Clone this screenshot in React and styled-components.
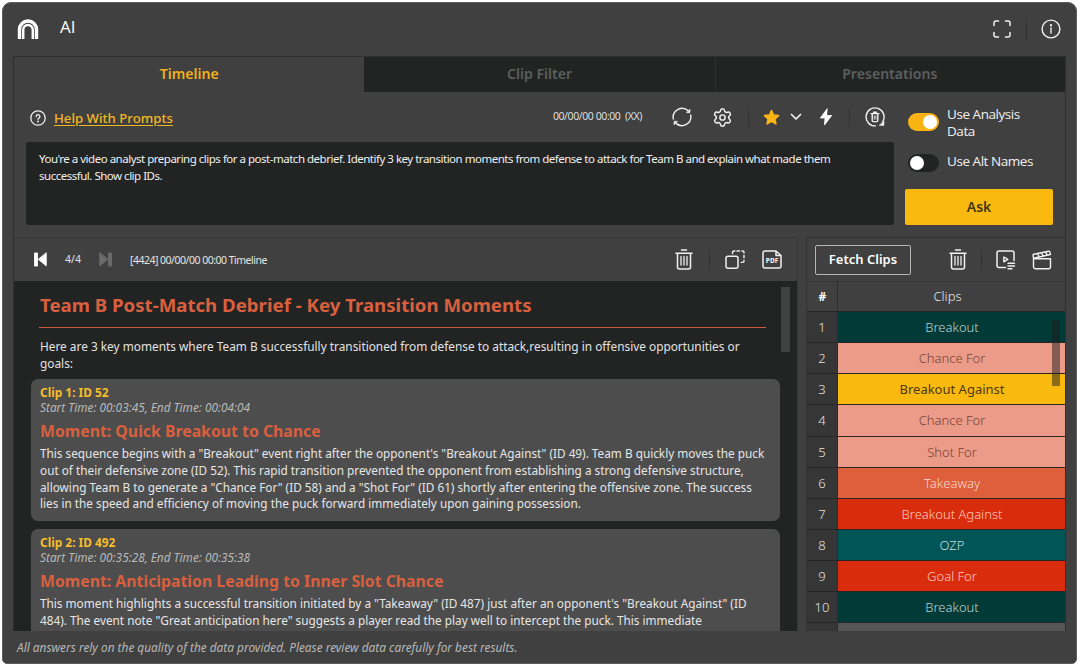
import React, { useState } from 'react'
import styled, { createGlobalStyle } from 'styled-components'
import { Settings } from 'lucide-react'

const GlobalStyle = createGlobalStyle`
  *{
    box-sizing:border-box;
  }
  body{
    margin:0;
    background:#fff;
    font-family:"Noto Sans","Open Sans",sans-serif;
    color:#e8e8e8;
  }
  button{
    font-family:inherit;
    cursor:pointer;
  }
  p,h1,h2,h3{
    margin:0;
  }
`

const clips = [
  { name: 'Breakout', bg: '#023a37', color: '#bdd3d1' },
  { name: 'Chance For', bg: '#ec9b89', color: '#744239' },
  { name: 'Breakout Against', bg: '#fab90f', color: '#4a3a12', weight: 400 },
  { name: 'Chance For', bg: '#ec9b89', color: '#744239' },
  { name: 'Shot For', bg: '#ec9b89', color: '#744239' },
  { name: 'Takeaway', bg: '#de5f3b', color: '#fbd8cd' },
  { name: 'Breakout Against', bg: '#d92c0c', color: '#fdcabc' },
  { name: 'OZP', bg: '#025557', color: '#c0dede' },
  { name: 'Goal For', bg: '#d92c0c', color: '#fdcabc' },
  { name: 'Breakout', bg: '#023a37', color: '#bdd3d1' },
]

const moments = [
  {
    clip: 'Clip 1: ID 52',
    time: 'Start Time: 00:03:45, End Time: 00:04:04',
    title: 'Moment: Quick Breakout to Chance',
    lines: [
      'This sequence begins with a "Breakout" event right after the opponent\'s "Breakout Against" (ID 49). Team B quickly moves the puck',
      'out of their defensive zone (ID 52). This rapid transition prevented the opponent from establishing a strong defensive structure,',
      'allowing Team B to generate a "Chance For" (ID 58) and a "Shot For" (ID 61) shortly after entering the offensive zone. The success',
      'lies in the speed and efficiency of moving the puck forward immediately upon gaining possession.',
    ],
  },
  {
    clip: 'Clip 2: ID 492',
    time: 'Start Time: 00:35:28, End Time: 00:35:38',
    title: 'Moment: Anticipation Leading to Inner Slot Chance',
    lines: [
      'This moment highlights a successful transition initiated by a "Takeaway" (ID 487) just after an opponent\'s "Breakout Against" (ID',
      '484). The event note "Great anticipation here" suggests a player read the play well to intercept the puck. This immediate',
    ],
  },
]

const Svg = ({ w = 20, h = 20, box = '0 0 20 20', sw = 1.5, color = '#f0f0f0', children }) => (
  <svg width={w} height={h} viewBox={box} fill="none" stroke={color} strokeWidth={sw} strokeLinecap="round" strokeLinejoin="round">
    {children}
  </svg>
)

const Logo = () => (
  <Svg w={22} h={21} box="0 0 22 21" color="#fff">
    <path d="M2.500 20V10.500a8.500 8.500 0 0 1 17 0V20" strokeWidth="3.400" strokeLinecap="butt" />
    <path d="M6.200 20V10.800a4.800 4.800 0 0 1 9.600 0V20" strokeWidth="2.500" strokeLinecap="butt" />
  </Svg>
)

const ExpandIcon = () => (
  <Svg w={18} h={18} box="0 0 18 18">
    <path d="M1 5.500V3a2 2 0 0 1 2-2h2.500M12.500 1H15a2 2 0 0 1 2 2v2.500M17 12.500V15a2 2 0 0 1-2 2h-2.500M5.500 17H3a2 2 0 0 1-2-2v-2.500" />
  </Svg>
)

const InfoIcon = () => (
  <Svg sw={1.4}>
    <circle cx="10" cy="10" r="8.900" />
    <path d="M10 9v5" />
    <circle cx="10" cy="6.200" r=".5" fill="#f0f0f0" />
  </Svg>
)

const HelpIcon = () => (
  <Svg w={16} h={16} box="0 0 16 16" sw={1.3}>
    <circle cx="8" cy="8" r="7.200" />
    <path d="M6.200 6.500a1.850 1.850 0 1 1 2.700 1.650c-.6.300-.9.600-.9 1.150" />
    <circle cx="8" cy="11.400" r=".35" fill="#f0f0f0" />
  </Svg>
)

const RefreshIcon = () => (
  <Svg sw={1.400}>
    <path d="M1.300 12A9 9 0 0 1 16 3.600M18.700 8A9 9 0 0 1 4 16.400" />
    <path d="M18 2.400v3.300h-3.300zM2 17.600v-3.300h3.300z" fill="#f0f0f0" strokeWidth=".6" />
  </Svg>
)

const StarIcon = () => (
  <Svg w={17} h={17} box="0 0 17 17" color="#fab514" sw={1.600}>
    <path d="M8.500 1.500l2.100 4.500 4.900.6-3.600 3.300 1 4.900-4.400-2.400-4.400 2.400 1-4.900L1.500 6.600l4.900-.6z" fill="#fab514" />
  </Svg>
)

const ChevronIcon = () => (
  <Svg w={12} h={8} box="0 0 12 8" sw={1.700}>
    <path d="M1.500 1.500L6 6l4.500-4.500" />
  </Svg>
)

const BoltIcon = () => (
  <Svg w={14} h={18} box="0 0 14 18" color="#fff" sw={.8}>
    <path d="M8 1L1.300 10H6l-.5 7L12.700 7.500H8z" fill="#fff" />
  </Svg>
)

const ResetTrashIcon = () => (
  <Svg sw={1.400}>
    <path d="M10.500 18.900A9 9 0 1 1 17.800 14.500" />
    <path d="M19 13.800v4.600h-4.600z" fill="#f0f0f0" strokeWidth=".5" />
    <path d="M6 6.600h8M8.500 5.200h3M7.200 6.600v7a1 1 0 0 0 1 1h3.600a1 1 0 0 0 1-1v-7" />
    <path d="M9.200 9v3.200M10.900 9v3.200" strokeWidth=".9" />
  </Svg>
)

const TrashIcon = () => (
  <Svg w={18} h={21} box="0 0 18 21" sw={1.500}>
    <path d="M1 4.200h16M6.500 1h5M2.500 4.200V18a2 2 0 0 0 2 2h9a2 2 0 0 0 2-2V4.200" />
    <path d="M6 7.500v8.500M9 7.500v8.500M12 7.500v8.500" strokeWidth="1.300" />
  </Svg>
)

const CopyIcon = () => (
  <Svg w={20} h={19} box="0 0 20 19">
    <rect x="1" y="6.200" width="12" height="12" rx="2" />
    <path d="M7.500 3.500V2.500a1.500 1.500 0 0 1 1.500-1.500h.8M12 1h2.500M17 1h.7a1.300 1.300 0 0 1 1.300 1.300v.7M19 5.500v2.200M19 10.200v.9a1.300 1.300 0 0 1-1.300 1.300h-1.500" strokeWidth="1.400" />
  </Svg>
)

const PdfLabel = styled.text`
  font:800 6.500px "Noto Sans",sans-serif;
  fill:#f0f0f0;
  stroke:none;
`

const PdfIcon = () => (
  <Svg w={20} h={19} box="0 0 20 19">
    <path d="M14 1H3a2 2 0 0 0-2 2v13a2 2 0 0 0 2 2h14a2 2 0 0 0 2-2V5.500zM14 1v4.500h5" />
    <PdfLabel x="10" y="12.500" textAnchor="middle">PDF</PdfLabel>
  </Svg>
)

const PlaylistIcon = () => (
  <Svg w={20} h={20}>
    <path d="M9.500 17.500H3a2 2 0 0 1-2-2V3a2 2 0 0 1 2-2h13a2 2 0 0 1 2 2v7.500" />
    <path d="M7.800 7v4.800l4-2.400zM12 13.200h6.500M12 16h6.500M12 18.800h4" strokeWidth="1.400" />
  </Svg>
)

const ClapperIcon = () => (
  <Svg w={20} h={20}>
    <path d="M1.500 8.800h17v8a2 2 0 0 1-2 2h-13a2 2 0 0 1-2-2zM1.500 8.300L1 5.300a1 1 0 0 1 .8-1.100L16.700 1.200a1 1 0 0 1 1.200.8l.5 2.500L1.500 8.300M5.500 3.500l1.700 3.300M9.500 2.700l1.700 3.300M13.500 1.900l1.700 3.300" strokeWidth="1.400" />
  </Svg>
)

const SkipIcon = ({ color, flip }) => (
  <Svg w={13} h={15} box="0 0 13 15" color={color} sw={1}>
    <g transform={flip ? 'matrix(-1 0 0 1 13 0)' : undefined} fill={color}>
      <rect x=".8" y="1" width="2.600" height="13" />
      <path d="M12.200 1.200v12.600L4.600 7.500z" />
    </g>
  </Svg>
)

const App = () => {
  const [prompt, setPrompt] = useState(
    "You're a video analyst preparing clips for a post-match debrief. Identify 3 key transition moments from defense to attack for Team B and explain what made them\nsuccessful. Show clip IDs."
  )
  const [analysis, setAnalysis] = useState(true)
  const [altNames, setAltNames] = useState(false)

  return (
    <>
      <GlobalStyle />
      <Window>
        <Header>
          <Logo />
          <Title>AI</Title>
          <ExpandIcon />
          <Divider mx="14.500px" h="21px" />
          <InfoIcon />
        </Header>

        <Main>
          <Tabs>
            <Tab $active>Timeline</Tab>
            <Tab>Clip Filter</Tab>
            <Tab $line>Presentations</Tab>
          </Tabs>

          <PromptArea>
            <PromptLeft>
              <PromptBar>
                <HelpIcon />
                <HelpLink href="#">Help With Prompts</HelpLink>
                <Stamp>00/00/00 00:00&nbsp; (XX)</Stamp>
                <Tools>
                  <RefreshIcon />
                  <Gap w="20px" />
                  <Settings size={21} strokeWidth={1.700} color="#f0f0f0" />
                  <Divider mx="14.500px" h="20px" />
                  <StarIcon />
                  <Gap w="10px" />
                  <ChevronIcon />
                  <Gap w="17px" />
                  <BoltIcon />
                  <Divider mx="15.500px" h="20px" />
                  <ResetTrashIcon />
                </Tools>
              </PromptBar>
              <PromptInput value={prompt} onChange={(e) => setPrompt(e.target.value)} spellCheck={false} />
            </PromptLeft>
            <Options>
              <Option>
                <Toggle $on={analysis} onClick={() => setAnalysis(!analysis)} />
                <OptionLabel>Use Analysis<br />Data</OptionLabel>
              </Option>
              <Option $second>
                <Toggle $on={altNames} onClick={() => setAltNames(!altNames)} />
                <OptionLabel>Use Alt Names</OptionLabel>
              </Option>
              <AskButton>Ask</AskButton>
            </Options>
          </PromptArea>

          <Panels>
            <Answer>
              <AnswerBar>
                <SkipIcon color="#fff" />
                <Page>4/4</Page>
                <SkipIcon color="#6b6b6b" flip />
                <Session>[4424] 00/00/00 00:00 Timeline</Session>
                <TrashIcon />
                <Divider mx="15.500px" h="20px" />
                <CopyIcon />
                <Gap w="17px" />
                <PdfIcon />
              </AnswerBar>
              <AnswerBody>
                <Heading>Team B Post-Match Debrief - Key Transition Moments</Heading>
                <Intro>
                  Here are 3 key moments where Team B successfully transitioned from defense to attack,resulting in offensive opportunities or<br />
                  goals:
                </Intro>
                {moments.map((m) => (
                  <Card key={m.clip}>
                    <ClipId>{m.clip}</ClipId>
                    <ClipTime>{m.time}</ClipTime>
                    <MomentTitle>{m.title}</MomentTitle>
                    {m.lines.map((line) => <Line key={line}>{line}</Line>)}
                  </Card>
                ))}
                <ScrollThumb />
              </AnswerBody>
            </Answer>

            <ClipPanel>
              <ClipBar>
                <FetchButton>Fetch Clips</FetchButton>
                <TrashIcon />
                <Divider mx="14px" h="20px" />
                <PlaylistIcon />
                <Gap w="16px" />
                <ClapperIcon />
              </ClipBar>
              <ClipHead>
                <HashCell>#</HashCell>
                <HeadCell>Clips</HeadCell>
              </ClipHead>
              <ClipRows>
                {clips.map((c, i) => (
                  <ClipRow key={i}>
                    <NumberCell>{i + 1}</NumberCell>
                    <NameCell $bg={c.bg} $color={c.color} $weight={c.weight}>{c.name}</NameCell>
                  </ClipRow>
                ))}
                <ClipRow>
                  <NumberCell />
                  <NameCell $bg="#565656" />
                </ClipRow>
                <ClipThumb />
              </ClipRows>
            </ClipPanel>
          </Panels>
        </Main>

        <Footer>All answers rely on the quality of the data provided. Please review data carefully for best results.</Footer>
      </Window>
    </>
  )
}

const Window = styled.div`
  width:1075px;
  height:662px;
  margin:2px 0 0 2px;
  padding:0 12px;
  display:flex;
  flex-direction:column;
  background:#404040;
  border:1px solid #5c5c5c;
  border-radius:9px 9px 5px 5px;
  overflow:hidden;
`

const Header = styled.header`
  height:53px;
  flex:none;
  display:flex;
  align-items:center;
  padding:0 3px 1px 2px;
`

const Title = styled.h1`
  flex:1;
  margin:-5px 0 0 21px;
  font-size:17px;
  font-weight:500;
  font-family:"Open Sans",sans-serif;
  color:#fff;
`

const Divider = styled.span`
  width:1px;
  height:${(p) => p.h};
  margin:0 ${(p) => p.mx};
  background:#333;
`

const Gap = styled.span`
  width:${(p) => p.w};
`

const Main = styled.main`
  width:1053px;
  margin-left:-2px;
  height:575px;
  flex:none;
  display:flex;
  flex-direction:column;
  border:1px solid #303030;
  border-top-color:#2e2e2e;
  border-bottom:none;
`

const Tabs = styled.nav`
  display:flex;
  height:35px;
  flex:none;
`

const Tab = styled.div`
  flex:1;
  display:flex;
  align-items:center;
  justify-content:center;
  padding-bottom:2px;
  font-size:14.100px;
  font-weight:600;
  color:${(p) => (p.$active ? '#f2b01e' : '#5c5f5e')};
  background:${(p) => (p.$active ? '#404040' : '#222423')};
  box-shadow:${(p) => (p.$line ? 'inset 1px 0 #2e302f' : 'none')};
`

const PromptArea = styled.section`
  height:145px;
  flex:none;
  display:flex;
  padding:0 12px;
`

const PromptLeft = styled.div`
  width:868px;
`

const PromptBar = styled.div`
  height:50px;
  display:flex;
  align-items:center;
  padding:2px 9px 0 4px;
`

const HelpLink = styled.a`
  margin-left:8px;
  flex:1;
  font-size:13.200px;
  font-weight:500;
  color:#f2b720;
  text-underline-offset:2px;
`

const Stamp = styled.span`
  margin:-4px 30px 0 0;
  font-size:10.500px;
  letter-spacing:-.42px;
  color:#dedede;
`

const Tools = styled.div`
  display:flex;
  align-items:center;
  padding-bottom:2px;
`

const PromptInput = styled.textarea`
  display:block;
  width:868px;
  height:83px;
  padding:9px 13px;
  resize:none;
  border:none;
  outline:none;
  border-radius:2px;
  background:#222423;
  color:#f0f0f0;
  font:400 11.500px/16.500px "Noto Sans",sans-serif;
  letter-spacing:-.49px;
  white-space:pre;
  overflow:hidden;
`

const Options = styled.div`
  width:148px;
  margin-left:11px;
  padding-top:14px;
  display:flex;
  flex-direction:column;
`

const Option = styled.label`
  display:flex;
  align-items:center;
  gap:8px;
  height:${(p) => (p.$second ? '32px' : '34px')};
  padding-left:3px;
  margin-top:${(p) => (p.$second ? '6px' : 0)};
`

const Toggle = styled.span`
  width:31px;
  height:18px;
  padding:2px;
  margin-top:${(p) => (p.$on ? '-3px' : '1px')};
  display:flex;
  justify-content:${(p) => (p.$on ? 'flex-end' : 'flex-start')};
  border-radius:9px;
  background:${(p) => (p.$on ? '#f9b413' : '#222423')};
  &::after{
    content:"";
    width:14px;
    height:14px;
    border-radius:50%;
    background:#fff;
  }
`

const OptionLabel = styled.span`
  margin-top:-1px;
  font:400 13.500px/17px "Open Sans",sans-serif;
  letter-spacing:-.45px;
  color:#f0f0f0;
  white-space:nowrap;
`

const AskButton = styled.button`
  height:36px;
  margin-top:11px;
  padding:0 0 2px;
  border:none;
  border-radius:2px;
  background:#fab90f;
  color:#43361b;
  font-size:14px;
  font-weight:600;
`

const Panels = styled.div`
  flex:1;
  min-height:0;
  display:flex;
  justify-content:space-between;
`

const Answer = styled.section`
  width:784px;
  display:flex;
  flex-direction:column;
  border-top:1px solid #363636;
  border-right:1px solid #363636;
`

const AnswerBar = styled.div`
  height:43px;
  flex:none;
  display:flex;
  align-items:center;
  padding:0 15px 0 20px;
`

const Page = styled.span`
  margin:-2px 18px 0 18px;
  font-size:10.500px;
  color:#e0e0e0;
`

const Session = styled.span`
  flex:1;
  margin-left:18px;
  font-size:10.500px;
  letter-spacing:-.5px;
  color:#e4e4e4;
`

const AnswerBody = styled.div`
  position:relative;
  flex:1;
  overflow:hidden;
  background:#222423;
  padding:0 17px 0 17px;
  white-space:nowrap;
`

const Heading = styled.h2`
  width:727px;
  height:47px;
  margin-left:8px;
  padding:9px 0 0 1px;
  font-size:18.650px;
  line-height:30px;
  font-weight:700;
  color:#d9603f;
  border-bottom:1px solid #d0593b;
`

const Intro = styled.p`
  margin:10px 0 8px 9px;
  font-size:11.850px;
  line-height:16.500px;
  color:#e2e2e2;
`

const Card = styled.article`
  height:142px;
  margin-bottom:8px;
  padding:6px 9px;
  border-radius:7px;
  background:#4d4d4d;
`

const ClipId = styled.p`
  font-size:11.900px;
  line-height:15px;
  font-weight:700;
  color:#f7bd2a;
`

const ClipTime = styled.p`
  font-size:11.820px;
  line-height:15px;
  font-style:italic;
  color:#b9b9b9;
`

const MomentTitle = styled.h3`
  margin:5px 0 2px;
  font-size:15.820px;
  line-height:23px;
  font-weight:700;
  color:#d9603f;
`

const Line = styled.p`
  font-size:11.790px;
  line-height:16.800px;
  color:#e6e6e6;
`

const ScrollThumb = styled.span`
  position:absolute;
  top:6px;
  right:7px;
  width:9px;
  height:65px;
  background:#404241;
`

const ClipPanel = styled.section`
  width:259px;
  display:flex;
  flex-direction:column;
  border-top:1px solid #333;
  border-left:1px solid #333;
`

const ClipBar = styled.div`
  height:43px;
  flex:none;
  display:flex;
  align-items:center;
  padding:0 13px 0 8px;
`

const FetchButton = styled.button`
  width:96px;
  height:30px;
  margin-right:auto;
  padding:0 0 2px;
  border:1px solid #b5b5b5;
  border-radius:2px;
  background:none;
  color:#fff;
  font-size:13px;
  font-weight:600;
`

const ClipHead = styled.div`
  display:flex;
  height:31px;
  flex:none;
  border-top:1px solid #363636;
  border-bottom:1px solid #262626;
`

const HashCell = styled.div`
  width:31px;
  display:grid;
  place-items:center;
  padding:0 0 1px 1px;
  font-size:12px;
  font-weight:700;
  color:#fff;
  border-right:1px solid #2c2c2c;
`

const HeadCell = styled.div`
  flex:1;
  display:grid;
  place-items:center;
  padding:0 8px 1px 0;
  font-size:13px;
  font-weight:300;
  color:#e8e8e8;
`

const ClipRows = styled.div`
  position:relative;
  flex:1;
  min-height:0;
  overflow:hidden;
`

const ClipRow = styled.div`
  display:flex;
  height:31.150px;
  border-bottom:1px solid #262626;
`

const NumberCell = styled.div`
  width:31px;
  display:grid;
  place-items:center;
  font-size:13px;
  font-weight:300;
  color:#e4e4e4;
  background:#363636;
  border-right:1px solid #2c2c2c;
`

const NameCell = styled.div`
  flex:1;
  display:grid;
  place-items:center;
  padding-left:1px;
  font-size:13px;
  font-weight:${(p) => p.$weight || 300};
  color:${(p) => p.$color};
  background:${(p) => p.$bg};
`

const ClipThumb = styled.span`
  position:absolute;
  top:8px;
  right:5px;
  width:8px;
  height:66px;
  background:rgba(30,30,30,.5);
`

const Footer = styled.footer`
  padding:7px 0 0 2px;
  font-size:11.850px;
  line-height:18px;
  font-style:italic;
  color:#b8b8b8;
`

export default App
